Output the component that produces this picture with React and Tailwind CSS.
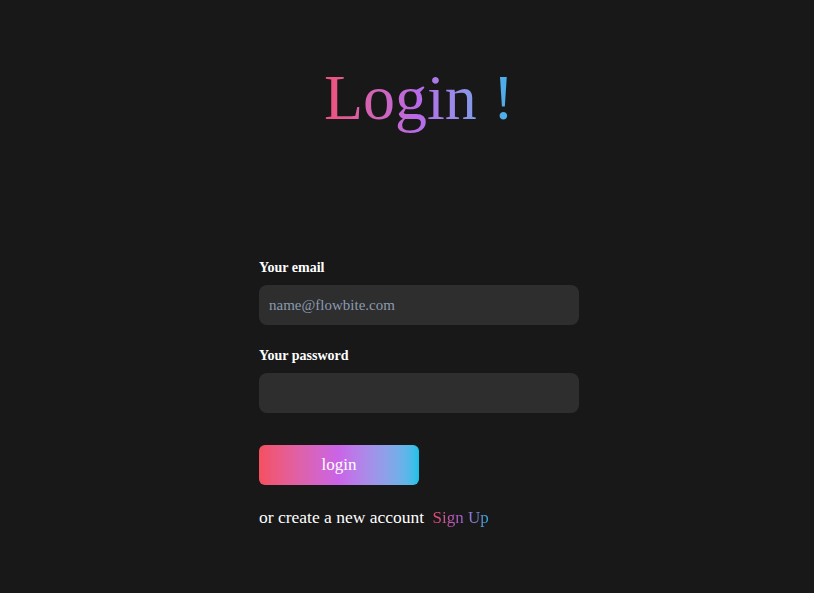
import React, { useState } from 'react';

export default function App() {
  const [email, setEmail] = useState('');
  const [password, setPassword] = useState('');

  return (
    <div className="min-h-[593px] bg-[#181818] text-white font-['Liberation_Serif',serif] pl-6">
      <div className="flex justify-center pt-[58px]">
        <h1 className="text-[64px] leading-[80px] bg-gradient-to-r from-[#f0507a] via-[#b86ae8] to-[#27b5ea] bg-clip-text text-transparent">
          Login !
        </h1>
      </div>

      <form className="w-80 mx-auto mt-[120px]" onSubmit={e => e.preventDefault()}>
        <label className="block text-sm font-bold mb-[7px] leading-5">Your email</label>
        <input
          type="email"
          className="w-full h-10 px-2.5 rounded-lg bg-[#2e2e2e] text-[15px] text-white placeholder:text-[#8a9bb0] outline-none"
          placeholder="name@flowbite.com"
          value={email}
          onChange={e => setEmail(e.target.value)}
        />

        <label className="block text-sm font-bold mt-[21px] mb-[7px] leading-5">Your password</label>
        <input
          type="password"
          className="w-full h-10 px-2.5 rounded-lg bg-[#2e2e2e] text-[15px] text-white outline-none"
          value={password}
          onChange={e => setPassword(e.target.value)}
        />

        <button
          type="submit"
          className="mt-8 w-40 h-10 rounded-md text-[17px] text-white bg-gradient-to-r from-[#f5505f] via-[#c964e8] to-[#12c2e9]"
        >
          login
        </button>

        <p className="mt-5 text-[17.5px] leading-6">
          or create a new account{' '}
          <a href="#" className="ml-1 text-[17px] bg-gradient-to-r from-[#e8456b] via-[#a35bd0] to-[#1aa6d8] bg-clip-text text-transparent">
            Sign Up
          </a>
        </p>
      </form>
    </div>
  );
}
